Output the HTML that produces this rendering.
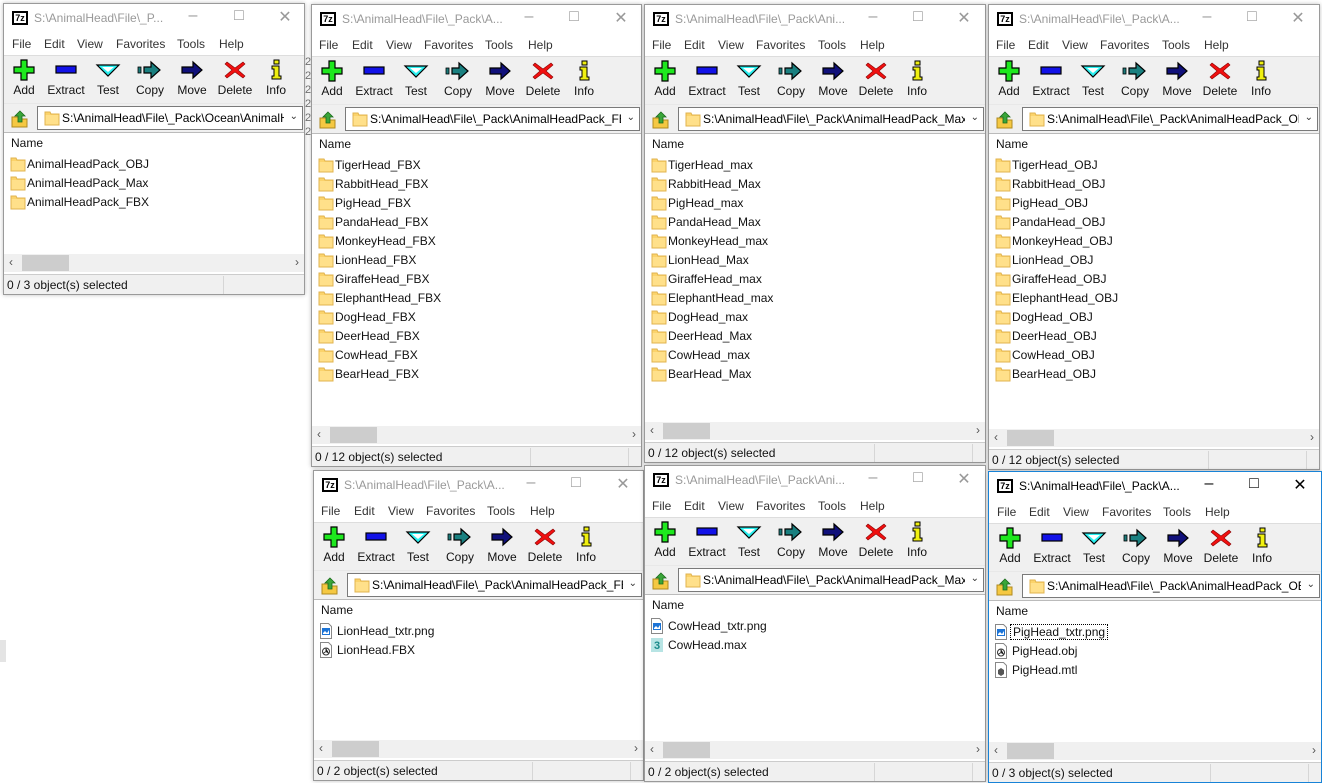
<!DOCTYPE html>
<html><head><meta charset="utf-8">
<style>
*{margin:0;padding:0;box-sizing:border-box}
body{width:1322px;height:783px;overflow:hidden;background:#fff;font:12px "Liberation Sans",sans-serif;color:#000;position:relative}
.w{position:absolute;border:1px solid #9a9a9a;background:#fff;overflow:hidden;box-shadow:0 0 4px rgba(0,0,0,.25)}
.w.act{border-color:#1883d7}
.ti{position:absolute;left:8px;top:7px;width:16px;height:14px;background:#000;color:#fff;font:bold 9px "Liberation Sans",sans-serif;line-height:12px;text-align:center;border:1px solid #000}
.ti span{display:block;background:#fff;color:#000;margin:1px;line-height:10px;height:10px}
.tt{position:absolute;left:30px;top:7px;color:#999;font-size:12px;white-space:nowrap}
.act .tt,.act .cb{color:#000}
.cb{position:absolute;top:3px;color:#999;font-size:16px;width:20px;text-align:center}
.mn{position:absolute;top:28px;left:0;right:0;height:24px;border-bottom:1px solid #ddd}
.mn span{position:absolute;top:5px;color:#333}
.tb{position:absolute;top:52px;left:0;right:0;height:47px;background:#f0f0f0}
.bt{position:absolute;width:42px;text-align:center;top:0}
.bt svg{display:block;margin:2px auto 0;width:26px;height:24px}
.bt div{margin-top:1px;font-size:12px;color:#111}
.ad{position:absolute;top:99px;left:0;right:0;height:29px;background:#f0f0f0;border-top:1px solid #e8e8e8}
.up{position:absolute;left:6px;top:5px}
.co{position:absolute;left:33px;right:1px;top:2px;height:24px;background:#fff;border:1px solid #7a7a7a;overflow:hidden;white-space:nowrap}
.co .fi{position:absolute;left:6px;top:3px}
.co .tx{position:absolute;left:24px;top:4px;right:18px;overflow:hidden;white-space:nowrap}
.co .dd{position:absolute;right:4px;top:4px;font-size:10px;color:#333}
.ls{position:absolute;top:128px;left:0;right:0;bottom:0;background:#fff;border-top:1px solid #bbb}
.nm{position:absolute;left:7px;top:3px;color:#111}
.it{position:absolute;left:6px;height:18px;white-space:nowrap}
.it svg{position:absolute;left:0;top:1px}
.it span{position:absolute;left:17px;top:2px;color:#111}
.sb{position:absolute;left:0;right:0;height:18px;background:#f0f0f0}
.sb .th{position:absolute;left:18px;width:47px;top:1px;height:16px;background:#cdcdcd}
.sb .la,.sb .ra{position:absolute;top:1px;font-size:12px;color:#555}
.st{position:absolute;left:0;right:0;bottom:0;height:20px;background:#f0f0f0;border-top:1px solid #ccc}
.st span{position:absolute;left:3px;top:3px;color:#111}
.st i{position:absolute;top:1px;width:1px;height:18px;background:#d6d6d6}
</style></head><body>
<svg width="0" height="0" style="position:absolute">
<defs>
<symbol id="add" viewBox="0 0 26 24"><path d="M10 2h6v7h7v6h-7v7h-6v-7H3V9h7z" fill="#1ee81e" stroke="#000" stroke-width="1.2"/></symbol>
<symbol id="ext" viewBox="0 0 26 24"><rect x="3" y="8" width="20" height="7" fill="#1212e8" stroke="#000" stroke-width="1.2"/></symbol>
<symbol id="tst" viewBox="0 0 26 24"><path d="M2 7h22l-11 11z" fill="#2af0f0" stroke="#000" stroke-width="1.2"/><path d="M7 9h12l-6 5z" fill="#fff"/></symbol>
<symbol id="cpy" viewBox="0 0 26 24"><rect x="1" y="9" width="3" height="6" fill="#1a7a7a" stroke="#000" stroke-width=".8"/><path d="M7 9h7V4l9 8-9 8v-5H7z" fill="#1a8080" stroke="#000" stroke-width="1.2"/></symbol>
<symbol id="mov" viewBox="0 0 26 24"><path d="M3 9h11V4l9 8-9 8v-5H3z" fill="#10107a" stroke="#000" stroke-width="1.2"/></symbol>
<symbol id="del" viewBox="0 0 26 24"><path d="M5 4l8 6 8-6 2 2-7 6 7 6-2 2-8-6-8 6-2-2 7-6-7-6z" fill="#f01010" stroke="#800" stroke-width=".6"/></symbol>
<symbol id="inf" viewBox="0 0 26 24"><rect x="11" y="2" width="5" height="4" fill="#f0f010" stroke="#000"/><path d="M9 8h7v10h2v3H9v-3h2v-7H9z" fill="#f0f010" stroke="#000"/></symbol>
<symbol id="fld" viewBox="0 0 16 16"><path d="M1 2h5l1 2h8v11H1z" fill="#fbd36b" stroke="#e0b34f"/><rect x="1.5" y="5" width="13" height="9.5" fill="#ffe08a"/></symbol>
<symbol id="upi" viewBox="0 0 20 20"><path d="M2 8h6l1 2h8v8H2z" fill="#f5c842" stroke="#b08a20"/><path d="M10 2l5 5h-3v6H8V7H5z" fill="#3aa63a" stroke="#1a6a1a" stroke-width=".8"/></symbol>
<symbol id="png" viewBox="0 0 12 16"><path d="M.5.5h8l3 3v12H.5z" fill="#fff" stroke="#888"/><rect x="2" y="5" width="8" height="7" fill="#1d74d6"/><path d="M3 10l2-2 2 2 2-3v4H3z" fill="#fff"/></symbol>
<symbol id="fbx" viewBox="0 0 12 16"><path d="M.5.5h8l3 3v12H.5z" fill="#fff" stroke="#888"/><circle cx="6" cy="9.5" r="3.5" fill="none" stroke="#333"/><path d="M6 6v3.5l3 2M6 9.5l-3 2" stroke="#333"/></symbol>
<symbol id="max" viewBox="0 0 12 16"><rect x="0" y="1" width="12" height="14" fill="#b7e4e4"/><text x="6" y="12" font-size="11" font-weight="bold" text-anchor="middle" fill="#1a8a8a" font-family="Liberation Sans">3</text></symbol>
<symbol id="mtl" viewBox="0 0 12 16"><path d="M.5.5h8l3 3v12H.5z" fill="#fff" stroke="#888"/><path d="M3 8l3-2 3 2v4l-3 2-3-2z" fill="#555"/></symbol>
</defs></svg>

<div style="position:absolute;left:305px;top:55px;width:8px;height:90px;color:#777;font-size:11px;line-height:14px">2,<br>2,<br>2,<br>2,<br>2,<br>2</div>
<div style="position:absolute;left:0;top:640px;width:6px;height:22px;background:#e4e4e4"></div>

<!-- W1 -->
<div class="w" style="left:3px;top:3px;width:302px;height:292px">
<div class="ti"><span>7z</span></div><div class="tt">S:\AnimalHead\File\_P...</div>
<div class="cb" style="left:179px">&#8211;</div><div class="cb" style="left:225px">&#9633;</div><div class="cb" style="left:271px">&#10005;</div>
<div class="mn"><span style="left:8px">File</span><span style="left:40px">Edit</span><span style="left:73px">View</span><span style="left:112px">Favorites</span><span style="left:173px">Tools</span><span style="left:215px">Help</span></div>
<div class="tb">
<div class="bt" style="left:-1px"><svg><use href="#add"/></svg><div>Add</div></div>
<div class="bt" style="left:41px"><svg><use href="#ext"/></svg><div>Extract</div></div>
<div class="bt" style="left:83px"><svg><use href="#tst"/></svg><div>Test</div></div>
<div class="bt" style="left:125px"><svg><use href="#cpy"/></svg><div>Copy</div></div>
<div class="bt" style="left:167px"><svg><use href="#mov"/></svg><div>Move</div></div>
<div class="bt" style="left:210px"><svg><use href="#del"/></svg><div>Delete</div></div>
<div class="bt" style="left:251px"><svg><use href="#inf"/></svg><div>Info</div></div>
</div>
<div class="ad"><svg class="up" width="20" height="20"><use href="#upi"/></svg><div class="co"><svg class="fi" width="16" height="16"><use href="#fld"/></svg><div class="tx">S:\AnimalHead\File\_Pack\Ocean\AnimalHeadPack</div><div class="dd">&#8964;</div></div></div>
<div class="ls"><div class="nm">Name</div>
<div class="it" style="top:22px"><svg width="16" height="16"><use href="#fld"/></svg><span>AnimalHeadPack_OBJ</span></div>
<div class="it" style="top:41px"><svg width="16" height="16"><use href="#fld"/></svg><span>AnimalHeadPack_Max</span></div>
<div class="it" style="top:60px"><svg width="16" height="16"><use href="#fld"/></svg><span>AnimalHeadPack_FBX</span></div>
<div class="sb" style="bottom:22px"><span class="la" style="left:5px">&lsaquo;</span><div class="th"></div><span class="ra" style="right:5px">&rsaquo;</span></div>
<div class="st"><span>0 / 3 object(s) selected</span><i style="right:80px"></i></div>
</div></div>

<!-- W2 -->
<div class="w" style="left:311px;top:4px;width:331px;height:463px">
<div class="ti"><span>7z</span></div><div class="tt">S:\AnimalHead\File\_Pack\A...</div>
<div class="cb" style="left:207px">&#8211;</div><div class="cb" style="left:252px">&#9633;</div><div class="cb" style="left:299px">&#10005;</div>
<div class="mn"><span style="left:7px">File</span><span style="left:40px">Edit</span><span style="left:74px">View</span><span style="left:112px">Favorites</span><span style="left:173px">Tools</span><span style="left:216px">Help</span></div>
<div class="tb">
<div class="bt" style="left:-1px"><svg><use href="#add"/></svg><div>Add</div></div>
<div class="bt" style="left:41px"><svg><use href="#ext"/></svg><div>Extract</div></div>
<div class="bt" style="left:83px"><svg><use href="#tst"/></svg><div>Test</div></div>
<div class="bt" style="left:125px"><svg><use href="#cpy"/></svg><div>Copy</div></div>
<div class="bt" style="left:167px"><svg><use href="#mov"/></svg><div>Move</div></div>
<div class="bt" style="left:210px"><svg><use href="#del"/></svg><div>Delete</div></div>
<div class="bt" style="left:251px"><svg><use href="#inf"/></svg><div>Info</div></div>
</div>
<div class="ad"><svg class="up" width="20" height="20"><use href="#upi"/></svg><div class="co"><svg class="fi" width="16" height="16"><use href="#fld"/></svg><div class="tx">S:\AnimalHead\File\_Pack\AnimalHeadPack_FBX</div><div class="dd">&#8964;</div></div></div>
<div class="ls"><div class="nm">Name</div>
<div class="it" style="top:22px"><svg width="16" height="16"><use href="#fld"/></svg><span>TigerHead_FBX</span></div>
<div class="it" style="top:41px"><svg width="16" height="16"><use href="#fld"/></svg><span>RabbitHead_FBX</span></div>
<div class="it" style="top:60px"><svg width="16" height="16"><use href="#fld"/></svg><span>PigHead_FBX</span></div>
<div class="it" style="top:79px"><svg width="16" height="16"><use href="#fld"/></svg><span>PandaHead_FBX</span></div>
<div class="it" style="top:98px"><svg width="16" height="16"><use href="#fld"/></svg><span>MonkeyHead_FBX</span></div>
<div class="it" style="top:117px"><svg width="16" height="16"><use href="#fld"/></svg><span>LionHead_FBX</span></div>
<div class="it" style="top:136px"><svg width="16" height="16"><use href="#fld"/></svg><span>GiraffeHead_FBX</span></div>
<div class="it" style="top:155px"><svg width="16" height="16"><use href="#fld"/></svg><span>ElephantHead_FBX</span></div>
<div class="it" style="top:174px"><svg width="16" height="16"><use href="#fld"/></svg><span>DogHead_FBX</span></div>
<div class="it" style="top:193px"><svg width="16" height="16"><use href="#fld"/></svg><span>DeerHead_FBX</span></div>
<div class="it" style="top:212px"><svg width="16" height="16"><use href="#fld"/></svg><span>CowHead_FBX</span></div>
<div class="it" style="top:231px"><svg width="16" height="16"><use href="#fld"/></svg><span>BearHead_FBX</span></div>
<div class="sb" style="bottom:22px"><span class="la" style="left:5px">&lsaquo;</span><div class="th"></div><span class="ra" style="right:5px">&rsaquo;</span></div>
<div class="st"><span>0 / 12 object(s) selected</span><i style="right:110px"></i><i style="right:12px"></i></div>
</div></div>

<!-- W3 -->
<div class="w" style="left:644px;top:4px;width:342px;height:459px">
<div class="ti"><span>7z</span></div><div class="tt">S:\AnimalHead\File\_Pack\Ani...</div>
<div class="cb" style="left:218px">&#8211;</div><div class="cb" style="left:263px">&#9633;</div><div class="cb" style="left:309px">&#10005;</div>
<div class="mn"><span style="left:7px">File</span><span style="left:39px">Edit</span><span style="left:73px">View</span><span style="left:111px">Favorites</span><span style="left:173px">Tools</span><span style="left:215px">Help</span></div>
<div class="tb">
<div class="bt" style="left:-1px"><svg><use href="#add"/></svg><div>Add</div></div>
<div class="bt" style="left:41px"><svg><use href="#ext"/></svg><div>Extract</div></div>
<div class="bt" style="left:83px"><svg><use href="#tst"/></svg><div>Test</div></div>
<div class="bt" style="left:125px"><svg><use href="#cpy"/></svg><div>Copy</div></div>
<div class="bt" style="left:167px"><svg><use href="#mov"/></svg><div>Move</div></div>
<div class="bt" style="left:210px"><svg><use href="#del"/></svg><div>Delete</div></div>
<div class="bt" style="left:251px"><svg><use href="#inf"/></svg><div>Info</div></div>
</div>
<div class="ad"><svg class="up" width="20" height="20"><use href="#upi"/></svg><div class="co"><svg class="fi" width="16" height="16"><use href="#fld"/></svg><div class="tx">S:\AnimalHead\File\_Pack\AnimalHeadPack_Max.zip</div><div class="dd">&#8964;</div></div></div>
<div class="ls"><div class="nm">Name</div>
<div class="it" style="top:22px"><svg width="16" height="16"><use href="#fld"/></svg><span>TigerHead_max</span></div>
<div class="it" style="top:41px"><svg width="16" height="16"><use href="#fld"/></svg><span>RabbitHead_Max</span></div>
<div class="it" style="top:60px"><svg width="16" height="16"><use href="#fld"/></svg><span>PigHead_max</span></div>
<div class="it" style="top:79px"><svg width="16" height="16"><use href="#fld"/></svg><span>PandaHead_Max</span></div>
<div class="it" style="top:98px"><svg width="16" height="16"><use href="#fld"/></svg><span>MonkeyHead_max</span></div>
<div class="it" style="top:117px"><svg width="16" height="16"><use href="#fld"/></svg><span>LionHead_Max</span></div>
<div class="it" style="top:136px"><svg width="16" height="16"><use href="#fld"/></svg><span>GiraffeHead_max</span></div>
<div class="it" style="top:155px"><svg width="16" height="16"><use href="#fld"/></svg><span>ElephantHead_max</span></div>
<div class="it" style="top:174px"><svg width="16" height="16"><use href="#fld"/></svg><span>DogHead_max</span></div>
<div class="it" style="top:193px"><svg width="16" height="16"><use href="#fld"/></svg><span>DeerHead_Max</span></div>
<div class="it" style="top:212px"><svg width="16" height="16"><use href="#fld"/></svg><span>CowHead_max</span></div>
<div class="it" style="top:231px"><svg width="16" height="16"><use href="#fld"/></svg><span>BearHead_Max</span></div>
<div class="sb" style="bottom:22px"><span class="la" style="left:5px">&lsaquo;</span><div class="th"></div><span class="ra" style="right:5px">&rsaquo;</span></div>
<div class="st"><span>0 / 12 object(s) selected</span><i style="right:110px"></i><i style="right:12px"></i></div>
</div></div>

<!-- W4 -->
<div class="w" style="left:988px;top:4px;width:332px;height:466px">
<div class="ti"><span>7z</span></div><div class="tt">S:\AnimalHead\File\_Pack\A...</div>
<div class="cb" style="left:208px">&#8211;</div><div class="cb" style="left:253px">&#9633;</div><div class="cb" style="left:299px">&#10005;</div>
<div class="mn"><span style="left:7px">File</span><span style="left:39px">Edit</span><span style="left:73px">View</span><span style="left:111px">Favorites</span><span style="left:173px">Tools</span><span style="left:215px">Help</span></div>
<div class="tb">
<div class="bt" style="left:-1px"><svg><use href="#add"/></svg><div>Add</div></div>
<div class="bt" style="left:41px"><svg><use href="#ext"/></svg><div>Extract</div></div>
<div class="bt" style="left:83px"><svg><use href="#tst"/></svg><div>Test</div></div>
<div class="bt" style="left:125px"><svg><use href="#cpy"/></svg><div>Copy</div></div>
<div class="bt" style="left:167px"><svg><use href="#mov"/></svg><div>Move</div></div>
<div class="bt" style="left:210px"><svg><use href="#del"/></svg><div>Delete</div></div>
<div class="bt" style="left:251px"><svg><use href="#inf"/></svg><div>Info</div></div>
</div>
<div class="ad"><svg class="up" width="20" height="20"><use href="#upi"/></svg><div class="co"><svg class="fi" width="16" height="16"><use href="#fld"/></svg><div class="tx">S:\AnimalHead\File\_Pack\AnimalHeadPack_OBJ</div><div class="dd">&#8964;</div></div></div>
<div class="ls"><div class="nm">Name</div>
<div class="it" style="top:22px"><svg width="16" height="16"><use href="#fld"/></svg><span>TigerHead_OBJ</span></div>
<div class="it" style="top:41px"><svg width="16" height="16"><use href="#fld"/></svg><span>RabbitHead_OBJ</span></div>
<div class="it" style="top:60px"><svg width="16" height="16"><use href="#fld"/></svg><span>PigHead_OBJ</span></div>
<div class="it" style="top:79px"><svg width="16" height="16"><use href="#fld"/></svg><span>PandaHead_OBJ</span></div>
<div class="it" style="top:98px"><svg width="16" height="16"><use href="#fld"/></svg><span>MonkeyHead_OBJ</span></div>
<div class="it" style="top:117px"><svg width="16" height="16"><use href="#fld"/></svg><span>LionHead_OBJ</span></div>
<div class="it" style="top:136px"><svg width="16" height="16"><use href="#fld"/></svg><span>GiraffeHead_OBJ</span></div>
<div class="it" style="top:155px"><svg width="16" height="16"><use href="#fld"/></svg><span>ElephantHead_OBJ</span></div>
<div class="it" style="top:174px"><svg width="16" height="16"><use href="#fld"/></svg><span>DogHead_OBJ</span></div>
<div class="it" style="top:193px"><svg width="16" height="16"><use href="#fld"/></svg><span>DeerHead_OBJ</span></div>
<div class="it" style="top:212px"><svg width="16" height="16"><use href="#fld"/></svg><span>CowHead_OBJ</span></div>
<div class="it" style="top:231px"><svg width="16" height="16"><use href="#fld"/></svg><span>BearHead_OBJ</span></div>
<div class="sb" style="bottom:22px"><span class="la" style="left:5px">&lsaquo;</span><div class="th"></div><span class="ra" style="right:5px">&rsaquo;</span></div>
<div class="st"><span>0 / 12 object(s) selected</span><i style="right:110px"></i><i style="right:12px"></i></div>
</div></div>

<!-- W5 -->
<div class="w" style="left:313px;top:470px;width:331px;height:311px">
<div class="ti"><span>7z</span></div><div class="tt">S:\AnimalHead\File\_Pack\A...</div>
<div class="cb" style="left:207px">&#8211;</div><div class="cb" style="left:252px">&#9633;</div><div class="cb" style="left:299px">&#10005;</div>
<div class="mn"><span style="left:7px">File</span><span style="left:40px">Edit</span><span style="left:74px">View</span><span style="left:112px">Favorites</span><span style="left:173px">Tools</span><span style="left:216px">Help</span></div>
<div class="tb">
<div class="bt" style="left:-1px"><svg><use href="#add"/></svg><div>Add</div></div>
<div class="bt" style="left:41px"><svg><use href="#ext"/></svg><div>Extract</div></div>
<div class="bt" style="left:83px"><svg><use href="#tst"/></svg><div>Test</div></div>
<div class="bt" style="left:125px"><svg><use href="#cpy"/></svg><div>Copy</div></div>
<div class="bt" style="left:167px"><svg><use href="#mov"/></svg><div>Move</div></div>
<div class="bt" style="left:210px"><svg><use href="#del"/></svg><div>Delete</div></div>
<div class="bt" style="left:251px"><svg><use href="#inf"/></svg><div>Info</div></div>
</div>
<div class="ad"><svg class="up" width="20" height="20"><use href="#upi"/></svg><div class="co"><svg class="fi" width="16" height="16"><use href="#fld"/></svg><div class="tx">S:\AnimalHead\File\_Pack\AnimalHeadPack_FBX</div><div class="dd">&#8964;</div></div></div>
<div class="ls"><div class="nm">Name</div>
<div class="it" style="top:22px"><svg width="12" height="16"><use href="#png"/></svg><span>LionHead_txtr.png</span></div>
<div class="it" style="top:41px"><svg width="12" height="16"><use href="#fbx"/></svg><span>LionHead.FBX</span></div>
<div class="sb" style="bottom:22px"><span class="la" style="left:5px">&lsaquo;</span><div class="th"></div><span class="ra" style="right:5px">&rsaquo;</span></div>
<div class="st"><span>0 / 2 object(s) selected</span><i style="right:110px"></i><i style="right:12px"></i></div>
</div></div>

<!-- W6 -->
<div class="w" style="left:644px;top:465px;width:342px;height:317px">
<div class="ti"><span>7z</span></div><div class="tt">S:\AnimalHead\File\_Pack\Ani...</div>
<div class="cb" style="left:218px">&#8211;</div><div class="cb" style="left:263px">&#9633;</div><div class="cb" style="left:309px">&#10005;</div>
<div class="mn"><span style="left:7px">File</span><span style="left:39px">Edit</span><span style="left:73px">View</span><span style="left:111px">Favorites</span><span style="left:173px">Tools</span><span style="left:215px">Help</span></div>
<div class="tb">
<div class="bt" style="left:-1px"><svg><use href="#add"/></svg><div>Add</div></div>
<div class="bt" style="left:41px"><svg><use href="#ext"/></svg><div>Extract</div></div>
<div class="bt" style="left:83px"><svg><use href="#tst"/></svg><div>Test</div></div>
<div class="bt" style="left:125px"><svg><use href="#cpy"/></svg><div>Copy</div></div>
<div class="bt" style="left:167px"><svg><use href="#mov"/></svg><div>Move</div></div>
<div class="bt" style="left:210px"><svg><use href="#del"/></svg><div>Delete</div></div>
<div class="bt" style="left:251px"><svg><use href="#inf"/></svg><div>Info</div></div>
</div>
<div class="ad"><svg class="up" width="20" height="20"><use href="#upi"/></svg><div class="co"><svg class="fi" width="16" height="16"><use href="#fld"/></svg><div class="tx">S:\AnimalHead\File\_Pack\AnimalHeadPack_Max.zip</div><div class="dd">&#8964;</div></div></div>
<div class="ls"><div class="nm">Name</div>
<div class="it" style="top:22px"><svg width="12" height="16"><use href="#png"/></svg><span>CowHead_txtr.png</span></div>
<div class="it" style="top:41px"><svg width="12" height="16"><use href="#max"/></svg><span>CowHead.max</span></div>
<div class="sb" style="bottom:22px"><span class="la" style="left:5px">&lsaquo;</span><div class="th"></div><span class="ra" style="right:5px">&rsaquo;</span></div>
<div class="st"><span>0 / 2 object(s) selected</span><i style="right:110px"></i><i style="right:12px"></i></div>
</div></div>

<!-- W7 active -->
<div class="w act" style="left:988px;top:471px;width:334px;height:312px">
<div class="ti"><span>7z</span></div><div class="tt">S:\AnimalHead\File\_Pack\A...</div>
<div class="cb" style="left:210px">&#8211;</div><div class="cb" style="left:255px">&#9633;</div><div class="cb" style="left:301px">&#10005;</div>
<div class="mn"><span style="left:8px">File</span><span style="left:40px">Edit</span><span style="left:74px">View</span><span style="left:113px">Favorites</span><span style="left:174px">Tools</span><span style="left:216px">Help</span></div>
<div class="tb">
<div class="bt" style="left:0px"><svg><use href="#add"/></svg><div>Add</div></div>
<div class="bt" style="left:42px"><svg><use href="#ext"/></svg><div>Extract</div></div>
<div class="bt" style="left:84px"><svg><use href="#tst"/></svg><div>Test</div></div>
<div class="bt" style="left:126px"><svg><use href="#cpy"/></svg><div>Copy</div></div>
<div class="bt" style="left:168px"><svg><use href="#mov"/></svg><div>Move</div></div>
<div class="bt" style="left:211px"><svg><use href="#del"/></svg><div>Delete</div></div>
<div class="bt" style="left:252px"><svg><use href="#inf"/></svg><div>Info</div></div>
</div>
<div class="ad"><svg class="up" width="20" height="20"><use href="#upi"/></svg><div class="co"><svg class="fi" width="16" height="16"><use href="#fld"/></svg><div class="tx">S:\AnimalHead\File\_Pack\AnimalHeadPack_OBJ</div><div class="dd">&#8964;</div></div></div>
<div class="ls"><div class="nm">Name</div>
<div class="it" style="top:22px"><svg width="12" height="16"><use href="#png"/></svg><span style="border:1px dotted #000;padding:0 2px;top:1px;left:15px">PigHead_txtr.png</span></div>
<div class="it" style="top:41px"><svg width="12" height="16"><use href="#fbx"/></svg><span>PigHead.obj</span></div>
<div class="it" style="top:60px"><svg width="12" height="16"><use href="#mtl"/></svg><span>PigHead.mtl</span></div>
<div class="sb" style="bottom:22px"><span class="la" style="left:5px">&lsaquo;</span><div class="th"></div><span class="ra" style="right:5px">&rsaquo;</span></div>
<div class="st"><span>0 / 3 object(s) selected</span><i style="right:110px"></i><i style="right:12px"></i></div>
</div></div>
</body></html>
